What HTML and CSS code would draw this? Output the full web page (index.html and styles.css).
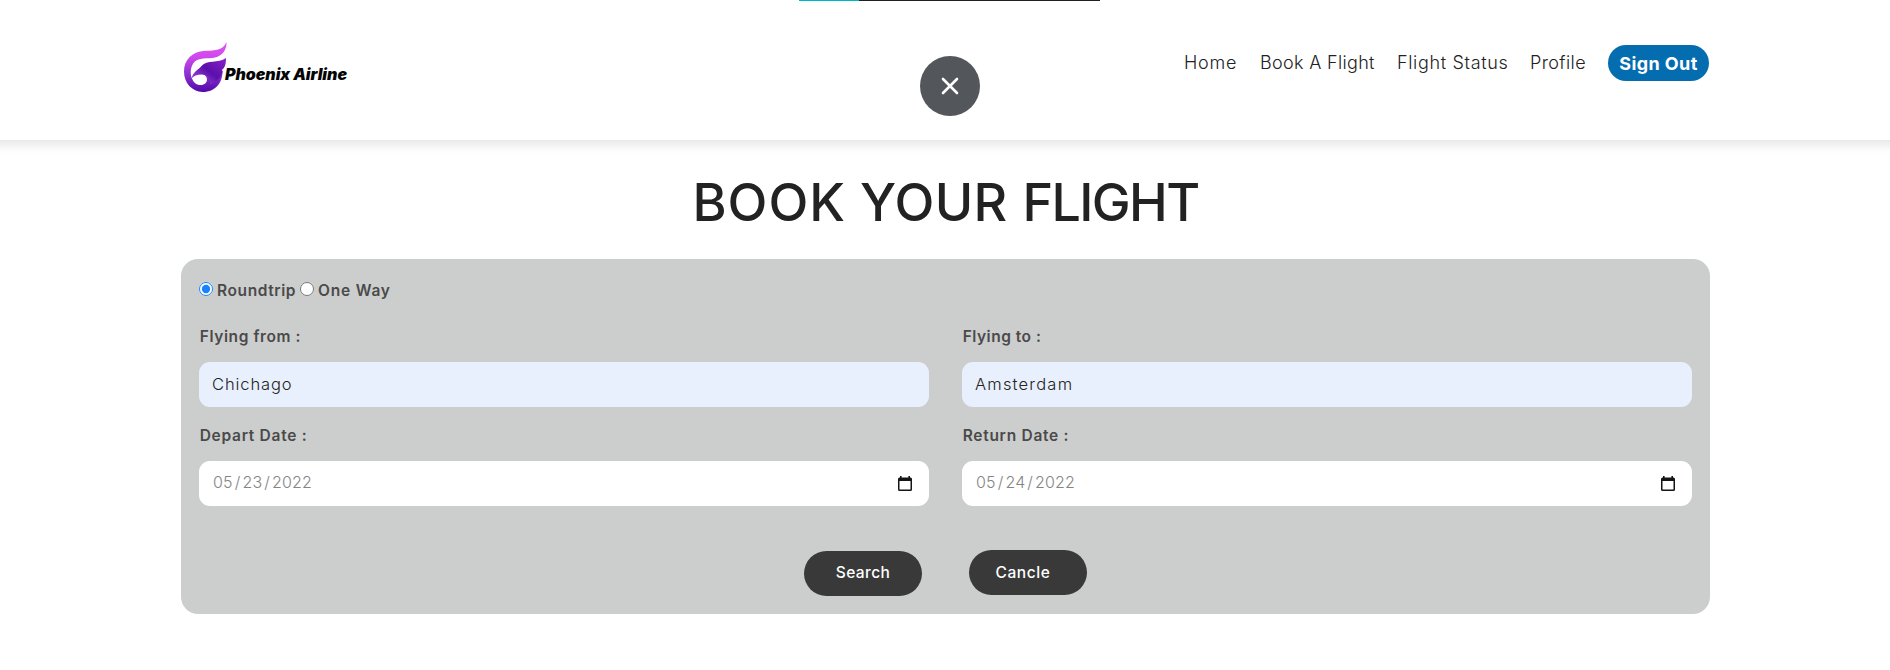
FILE: index.html
```html
<!DOCTYPE html>
<html lang="en">
<head>
<meta charset="utf-8">
<title>Phoenix Airline</title>
<link rel="stylesheet" href="styles.css">
</head>
<body>
<header class="header">
  <a class="logo">
    <svg class="logo-mark" width="46" height="52" viewBox="0 0 46 52">
      <defs>
        <linearGradient id="wing" x1="0" y1="0" x2="0" y2="1">
          <stop offset="0" stop-color="#e055f2"/><stop offset=".3" stop-color="#cf48ee"/><stop offset=".65" stop-color="#8a30d0"/><stop offset="1" stop-color="#5408a8"/>
        </linearGradient>
        <linearGradient id="feather" x1="1" y1="0" x2="0" y2="1">
          <stop offset="0" stop-color="#8a20c8"/><stop offset=".5" stop-color="#5a10aa"/><stop offset="1" stop-color="#b052e8"/>
        </linearGradient>
      </defs>
      <path fill="url(#wing)" d="M42.500 1C43 9 38 15 31 16.500C24 18 14 16 9.500 22C6 27 6 34 8.500 38.500C10 42.500 14 44.500 18 44C24 43 25 36 19 33L30 26L38 28C39 33 38 39 34.500 43.500C31 48.500 25 51 18.500 51C8 50.500 0 42 0 30.500C0 19 8 11 19 10C29 9.500 39 10 42.500 1Z"/>
      <path fill="url(#feather)" d="M42 17C42 23 41 27 37.500 29C39.500 30 38.500 33 36.500 35C35 39 31 42 26 43C27 37 23 33.500 17.500 33.500C13 33.500 10 35 7.500 37.500C9 31 14 29 17.500 25C23 18 34 23 42 17Z"/>
    </svg>
    <span class="logo-name">Phoenix Airline</span>
  </a>
  <nav class="nav">
    <a class="n1">Home</a>
    <a class="n2">Book A Flight</a>
    <a class="n3">Flight Status</a>
    <a class="n4">Profile</a>
    <a class="sign-out">Sign Out</a>
  </nav>
</header>
<div class="progress"><div class="progress-fill"></div></div>
<button class="close" aria-label="Close">
  <svg width="18" height="18" viewBox="0 0 18 18"><path d="M2 2L16 16M16 2L2 16" stroke="#fff" stroke-width="2.6" stroke-linecap="round"/></svg>
</button>
<main class="main">
  <h1 class="title"><span class="w1">BOOK</span> <span class="w2">YOUR</span> <span class="w3">FLIGHT</span></h1>
  <form class="card">
    <div class="trip">
      <input type="radio" name="trip" class="radio" checked><label class="t1">Roundtrip</label>
      <input type="radio" name="trip" class="radio"><label class="t2">One Way</label>
    </div>
    <div class="grid">
      <div class="field"><label class="f1">Flying from :</label><div class="control filled"><span class="v1">Chichago</span></div></div>
      <div class="field"><label class="f2">Flying to :</label><div class="control filled"><span class="v2">Amsterdam</span></div></div>
      <div class="field"><label class="f3">Depart Date :</label><div class="control date"><span>05<i>/</i>23<i>/</i>2022</span>
        <svg width="14" height="16" viewBox="0 0 14 16"><path fill="#151515" d="M2 0h1.6v1.5h6.8V0H12v1.5h.5Q14 1.500 14 3v10.500Q14 15 12.500 15h-11Q0 15 0 13.500V3Q0 1.500 1.500 1.500H2zM1.500 5v8.500h11V5z"/></svg></div></div>
      <div class="field"><label class="f4">Return Date :</label><div class="control date"><span>05<i>/</i>24<i>/</i>2022</span>
        <svg width="14" height="16" viewBox="0 0 14 16"><path fill="#151515" d="M2 0h1.6v1.5h6.8V0H12v1.5h.5Q14 1.500 14 3v10.500Q14 15 12.500 15h-11Q0 15 0 13.500V3Q0 1.500 1.500 1.500H2zM1.500 5v8.500h11V5z"/></svg></div></div>
    </div>
    <div class="actions">
      <button type="button" class="btn search">Search</button>
      <button type="button" class="btn cancel">Cancle</button>
    </div>
  </form>
</main>
</body>
</html>
```
FILE: styles.css
```css
* { box-sizing: border-box; }
body { margin: 0; height: 670px; overflow: hidden; background: #fff; color: #222; font-family: Inter, "Open Sans", sans-serif; }
label, span, a, button, h1 { white-space: nowrap; }
.header { height: 140px; margin: 0 -20px; padding: 0 201px; display: flex; justify-content: space-between; align-items: flex-start; box-shadow: 0 5px 10px rgba(0,0,0,.1); }
.logo { display: flex; margin: 41px 0 0 3px; }
.logo-mark { flex: none; }
.logo-name { margin: 22px 0 0 -5px; font-size: 16px; line-height: 22px; font-weight: 900; font-style: italic; color: #050505; letter-spacing: -.05px; }
.nav { display: flex; margin-top: 45px; font-size: 18px; font-weight: 300; line-height: 36px; }
.nav a { flex: none; }
.n1 { width: 76px; letter-spacing: .8px; }
.n2 { width: 137px; letter-spacing: .32px; }
.n3 { width: 133px; letter-spacing: .66px; }
.n4 { width: 78px; letter-spacing: .4px; }
.nav .sign-out { width: 101px; height: 36px; border-radius: 18px; background: #046daf; color: #fff; font-weight: 700; text-align: center; line-height: 38px; letter-spacing: .4px; }
.progress { position: absolute; top: 0; left: 799px; width: 301px; height: 1px; background: #221f20; }
.progress-fill { width: 60px; height: 1px; background: #00b5c5; }
.close { position: absolute; top: 56px; left: 920px; width: 60px; height: 60px; padding: 0; border: 0; border-radius: 50%; background: #53565a; display: flex; align-items: center; justify-content: center; }
.main { padding: 24px 180px 0 181px; }
.title { margin: 0; height: 95px; line-height: 78px; font-size: 52px; font-weight: 450; text-align: center; }
.w1 { letter-spacing: 1px; }
.w2 { letter-spacing: .3px; }
.w3 { letter-spacing: -1.6px; margin-left: 1px; }
.card { height: 355px; padding: 22px 18px 0; border-radius: 17px; background: #cccecd; color: #4a4a4a; }
.trip { display: flex; height: 28px; font-size: 15.5px; font-weight: 600; line-height: 20px; }
.radio { flex: none; width: 14px; height: 14px; margin: 1px 4px 0 0; accent-color: #1a82ff; }
.t1 { width: 83px; letter-spacing: .6px; }
.t2 { letter-spacing: .8px; }
.grid { display: grid; grid-template-columns: 730px 730px; column-gap: 33px; }
.field { height: 99px; font-size: 15.5px; font-weight: 600; padding-top: 18px; }
.field label { display: block; height: 35px; line-height: 20px; padding-left: .7px; }
.f1 { letter-spacing: .6px; }
.f2 { letter-spacing: .5px; }
.f3, .f4 { letter-spacing: .72px; }
.control { height: 45px; padding: 0 17px 0 13px; border-radius: 11px; background: #fff; color: #858585; font-size: 16px; font-weight: 300; line-height: 44px; display: flex; justify-content: space-between; align-items: center; }
.filled { background: #e9f0fd; color: #222; align-items: flex-start; line-height: 45px; font-size: 16.5px; }
.v1 { letter-spacing: .9px; }
.v2 { letter-spacing: 1.2px; }
.control i { font-style: normal; padding: 0 2px; }
.date { padding-left: 14px; }
.date span { line-height: 42px; padding-bottom: 3px; letter-spacing: .15px; }
.actions { display: flex; gap: 47px; margin: 43px 0 0 605px; }
.btn { width: 118px; height: 45px; padding: 0 0 2px; border: 0; border-radius: 23px; background: #393939; color: #fff; font-family: inherit; font-size: 15.5px; font-weight: 500; letter-spacing: .4px; }
.search { margin-top: 1px; }
.cancel { padding-right: 10px; letter-spacing: .6px; padding-bottom: 0; }
```
